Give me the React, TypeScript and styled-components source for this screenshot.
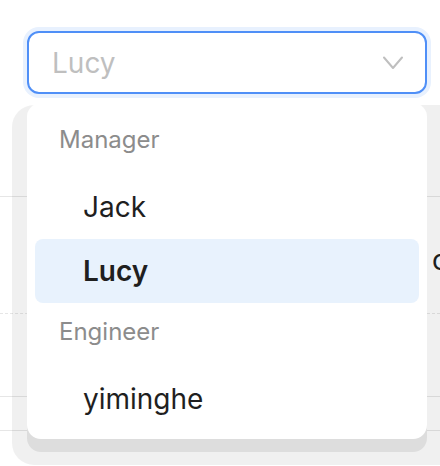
import React from "react";
import styled, { createGlobalStyle } from "styled-components";

const Global = createGlobalStyle`
  html, body { margin: 0; padding: 0; background: #ffffff; }
  body { font-family: Inter, "Noto Sans", "Liberation Sans", sans-serif; }
  * { box-sizing: border-box; }
`;

const Page = styled.div`
  position: relative;
  width: 440px;
  height: 466px;
  overflow: hidden;
  background: #ffffff;
`;

const SelectBox = styled.div`
  margin: 31px 13px 0 27px;
  height: 63px;
  border: 2px solid #4f8ff7;
  border-radius: 12px;
  box-shadow: 0 0 0 4px #e8f1fe;
  display: flex;
  align-items: center;
  justify-content: space-between;
  padding: 0 22px 0 23px;
  background: #ffffff;
`;

const Placeholder = styled.span`
  font-size: 28px;
  color: #bfbfbf;
`;

const Table = styled.div`
  display: flex;
  flex-direction: column;
`;

const Row = styled.div<{ $h: number; $dashed?: boolean }>`
  height: ${(p) => p.$h}px;
  border-bottom: 1px ${(p) => (p.$dashed ? "dashed" : "solid")} #e6e6e6;
  display: flex;
  padding-left: 432px;
  white-space: nowrap;
`;

const Cell = styled.span`
  font-size: 28px;
  line-height: 40px;
  color: #1f1f1f;
  padding-top: 43px;
`;

const Backdrop = styled.div`
  position: absolute;
  left: 12px;
  top: 105px;
  width: 460px;
  height: 360px;
  border-radius: 22px;
  background: rgba(0, 0, 0, 0.06);
`;

const Dropdown = styled.div`
  position: absolute;
  left: 27px;
  top: 103px;
  width: 400px;
  padding: 8px;
  background: #ffffff;
  border-radius: 14px;
  box-shadow: 0 13px 0 0 #dddddd;
  display: flex;
  flex-direction: column;
`;

const GroupTitle = styled.div`
  height: 64px;
  display: flex;
  align-items: center;
  padding: 0 0 8px 24px;
  font-size: 24px;
  color: #8c8c8c;
`;

const Option = styled.div<{ $selected?: boolean }>`
  height: 64px;
  display: flex;
  align-items: center;
  padding-left: 48px;
  font-size: 28px;
  border-radius: 8px;
  color: #1f1f1f;
  font-weight: ${(p) => (p.$selected ? 600 : 400)};
  background: ${(p) => (p.$selected ? "#e8f2fd" : "transparent")};
`;

const Chevron = () => (
  <svg width="20" height="14" viewBox="0 0 20 14" fill="none">
    <polyline points="1,1.5 10,12 19,1.5" stroke="#bfbfbf" strokeWidth="2" strokeLinejoin="round" strokeLinecap="round" />
  </svg>
);

export default function App() {
  return (
    <Page>
      <Global />
      <SelectBox>
        <Placeholder>Lucy</Placeholder>
        <Chevron />
      </SelectBox>
      <Table>
        <Row $h={103} />
        <Row $h={117} $dashed>
          <Cell>c</Cell>
        </Row>
        <Row $h={83} />
        <Row $h={34} />
      </Table>
      <Backdrop />
      <Dropdown>
        <GroupTitle>Manager</GroupTitle>
        <Option>Jack</Option>
        <Option $selected>Lucy</Option>
        <GroupTitle>Engineer</GroupTitle>
        <Option>yiminghe</Option>
      </Dropdown>
    </Page>
  );
}
